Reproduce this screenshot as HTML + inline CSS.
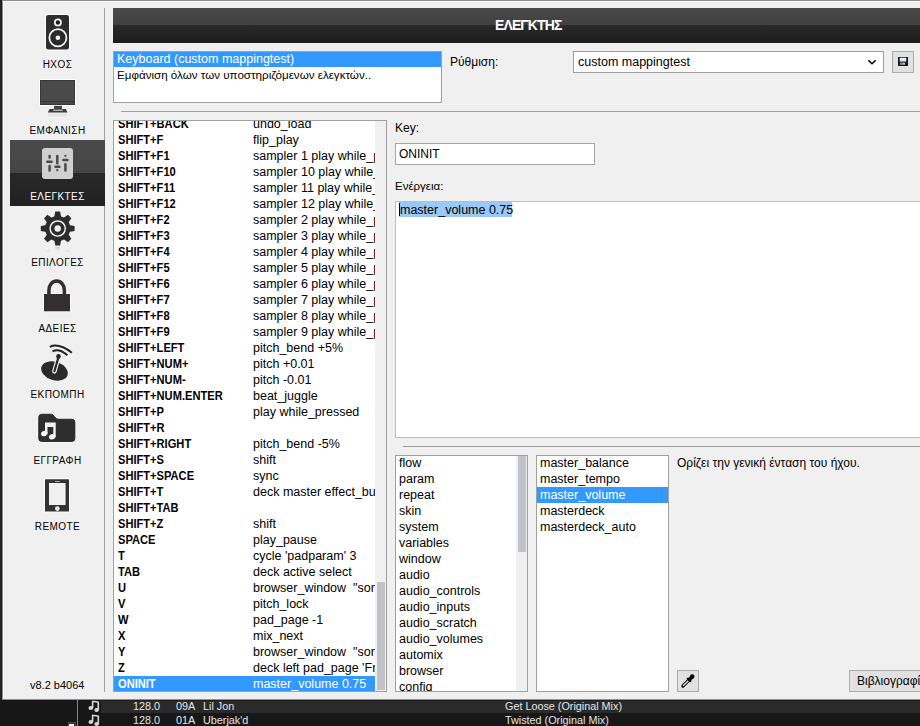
<!DOCTYPE html>
<html><head><meta charset="utf-8">
<style>
*{margin:0;padding:0;box-sizing:border-box}
html,body{width:920px;height:726px;overflow:hidden;background:#1a1a1a;font-family:"Liberation Sans",sans-serif;font-size:12px;color:#000}
.a{position:absolute}
.t{position:absolute;white-space:pre;line-height:16px}
.lb{position:absolute;background:#fff;border:1px solid #a0a0a0;overflow:hidden}
.row{position:absolute;left:0;height:16px;width:100%;white-space:pre;line-height:16px}
.sel{background:#3399ff;color:#fff}
.sb{position:absolute;background:#f0f0f0}
.th{position:absolute;background:#c2c3c8}
.side{position:absolute;left:0;width:115px;text-align:center;font-size:10px;letter-spacing:0.43px;line-height:12px;color:#000}
.btn{position:absolute;background:#e1e1e1;border:1px solid #adadad}
.lat{font-size:12.5px}
.kb{font-size:12.4px;font-weight:bold;transform:scaleX(0.897);transform-origin:0 0}
.trk{position:absolute;white-space:pre;font-size:10.8px;line-height:13px;color:#e6e6e6}
</style></head><body>
<div class="a" style="left:0;top:700px;width:920px;height:26px;background:#171717"></div>
<div class="a" style="left:101px;top:701px;width:819px;height:12px;background:#2a2a2a"></div>
<div class="a" style="left:101px;top:700px;width:819px;height:1px;background:#1e1e1e"></div>
<div class="a" style="left:77px;top:700px;width:1px;height:26px;background:#858585"></div>
<svg class="a" style="left:86px;top:699px" width="16" height="14" viewBox="86 699 16 14"><g fill="none" stroke="#d8d8d8" stroke-width="1.6"><path d="M92.6 708 V701.6 Q95.5 701.4 98.3 702.2 V710"/></g><ellipse cx="90.8" cy="708" rx="2.3" ry="2" fill="#d8d8d8"/><ellipse cx="96.6" cy="710.1" rx="2.3" ry="2" fill="#d8d8d8"/></svg>
<svg class="a" style="left:86px;top:712.5px" width="16" height="14" viewBox="86 699 16 14"><g fill="none" stroke="#d8d8d8" stroke-width="1.6"><path d="M92.6 708 V701.6 Q95.5 701.4 98.3 702.2 V710"/></g><ellipse cx="90.8" cy="708" rx="2.3" ry="2" fill="#d8d8d8"/><ellipse cx="96.6" cy="710.1" rx="2.3" ry="2" fill="#d8d8d8"/></svg>
<div class="a" style="left:68px;top:722px;width:8px;height:4px;background:#4a4a4a"></div><div class="a" style="left:69px;top:723px;width:6px;height:3px;background:#2a2a2a"></div><div class="a" style="left:69px;top:724px;width:5px;height:2px;background:#fafafa"></div>
<div class="trk" style="left:133px;top:700px">128.0</div>
<div class="trk" style="left:176px;top:700px">09A</div>
<div class="trk" style="left:203px;top:700px">Lil Jon</div>
<div class="trk" style="left:505px;top:700px">Get Loose (Original Mix)</div>
<div class="trk" style="left:133px;top:714px">128.0</div>
<div class="trk" style="left:176px;top:714px">01A</div>
<div class="trk" style="left:203px;top:714px">Uberjak'd</div>
<div class="trk" style="left:505px;top:714px">Twisted (Original Mix)</div>
<div class="a" style="left:0;top:0;width:2px;height:700px;background:#222"></div>
<div class="a" style="left:2px;top:0;width:930px;height:700px;background:#f0f0f0;border:1px solid #8f8f8f;border-right:none"></div>
<div class="a" style="left:3px;top:1px;width:917px;height:1px;background:#f8f8f8"></div>
<div class="a" style="left:3px;top:1px;width:1px;height:697px;background:#f8f8f8"></div>
<div class="a" style="left:104px;top:8px;width:1px;height:684px;background:#a0a0a0"></div>
<div class="a" style="left:10px;top:140px;width:95px;height:33px;background:linear-gradient(#4a4a4a,#454545)"></div>
<div class="a" style="left:10px;top:173px;width:95px;height:33px;background:linear-gradient(#282828,#212121)"></div>
<div class="side" style="top:59px;color:#000">ΗΧΟΣ</div>
<div class="side" style="top:125px;color:#000">ΕΜΦΑΝΙΣΗ</div>
<div class="side" style="top:191px;color:#fff">ΕΛΕΓΚΤΕΣ</div>
<div class="side" style="top:257px;color:#000">ΕΠΙΛΟΓΕΣ</div>
<div class="side" style="top:323px;color:#000">ΑΔΕΙΕΣ</div>
<div class="side" style="top:389px;color:#000">ΕΚΠΟΜΠΗ</div>
<div class="side" style="top:455px;color:#000">ΕΓΓΡΑΦΗ</div>
<div class="side" style="top:521px;color:#000">REMOTE</div>
<div class="t" style="left:30px;top:679px;font-size:11px;line-height:13px">v8.2 b4064</div>
<div class="a" style="left:113px;top:8px;width:807px;height:17px;background:linear-gradient(#4a4a4a,#404040)"></div>
<div class="a" style="left:113px;top:25px;width:807px;height:18px;background:linear-gradient(#2a2a2a,#1c1c1c)"></div>
<div class="t" style="left:495px;top:17px;font-size:14px;letter-spacing:-0.9px;font-weight:bold;color:#fff">ΕΛΕΓΚΤΗΣ</div>
<div class="lb" style="left:113px;top:51px;width:329px;height:52px"><div class="row sel lat" style="top:0;height:15px;line-height:15px;padding-left:3px">Keyboard (custom mappingtest)</div><div class="row" style="top:15px;padding-left:3px;font-size:11.6px">Εμφάνιση όλων των υποστηριζόμενων ελεγκτών..</div></div>
<div class="t" style="left:450px;top:54px">Ρύθμιση:</div>
<div class="lb" style="left:573px;top:51px;width:311px;height:22px"><div class="row lat" style="top:2px;padding-left:4px">custom mappingtest</div></div>
<svg class="a" style="left:866px;top:57px" width="12" height="10"><path d="M2.3 3.2 L6 6.8 L9.7 3.2" fill="none" stroke="#000" stroke-width="1.5"/></svg>
<div class="btn" style="left:892px;top:51px;width:22px;height:22px"></div>
<svg class="a" style="left:898px;top:57px" width="11" height="10"><defs><linearGradient id="fl" x1="0" y1="0" x2="0" y2="1"><stop offset="0" stop-color="#f8fafc"/><stop offset="1" stop-color="#cdd5df"/></linearGradient></defs><rect x="0" y="0" width="10" height="9" fill="#15181c"/><rect x="1.76" y="0.77" width="6.5" height="3.86" fill="url(#fl)"/><rect x="2" y="5.6" width="5.06" height="2.2" fill="#8e9296"/><rect x="5.2" y="5.9" width="1.5" height="1.6" fill="#d8dadc"/></svg>
<div class="a" style="left:121px;top:111px;width:799px;height:1px;background:#a0a0a0"></div>
<div class="lb" style="left:113px;top:120px;width:274px;height:572px"><div class="row" style="top:-5px"><span class="a kb" style="left:4px">SHIFT+BACK</span><span class="a lat" style="left:139px;width:122px;overflow:hidden">undo_load</span></div><div class="row" style="top:11px"><span class="a kb" style="left:4px">SHIFT+F</span><span class="a lat" style="left:139px;width:122px;overflow:hidden">flip_play</span></div><div class="row" style="top:27px"><span class="a kb" style="left:4px">SHIFT+F1</span><span class="a lat" style="left:139px;width:122px;overflow:hidden">sampler 1 play while_pressed</span></div><div class="row" style="top:43px"><span class="a kb" style="left:4px">SHIFT+F10</span><span class="a lat" style="left:139px;width:122px;overflow:hidden">sampler 10 play while_pressed</span></div><div class="row" style="top:59px"><span class="a kb" style="left:4px">SHIFT+F11</span><span class="a lat" style="left:139px;width:122px;overflow:hidden">sampler 11 play while_pressed</span></div><div class="row" style="top:75px"><span class="a kb" style="left:4px">SHIFT+F12</span><span class="a lat" style="left:139px;width:122px;overflow:hidden">sampler 12 play while_pressed</span></div><div class="row" style="top:91px"><span class="a kb" style="left:4px">SHIFT+F2</span><span class="a lat" style="left:139px;width:122px;overflow:hidden">sampler 2 play while_pressed</span></div><div class="row" style="top:107px"><span class="a kb" style="left:4px">SHIFT+F3</span><span class="a lat" style="left:139px;width:122px;overflow:hidden">sampler 3 play while_pressed</span></div><div class="row" style="top:123px"><span class="a kb" style="left:4px">SHIFT+F4</span><span class="a lat" style="left:139px;width:122px;overflow:hidden">sampler 4 play while_pressed</span></div><div class="row" style="top:139px"><span class="a kb" style="left:4px">SHIFT+F5</span><span class="a lat" style="left:139px;width:122px;overflow:hidden">sampler 5 play while_pressed</span></div><div class="row" style="top:155px"><span class="a kb" style="left:4px">SHIFT+F6</span><span class="a lat" style="left:139px;width:122px;overflow:hidden">sampler 6 play while_pressed</span></div><div class="row" style="top:171px"><span class="a kb" style="left:4px">SHIFT+F7</span><span class="a lat" style="left:139px;width:122px;overflow:hidden">sampler 7 play while_pressed</span></div><div class="row" style="top:187px"><span class="a kb" style="left:4px">SHIFT+F8</span><span class="a lat" style="left:139px;width:122px;overflow:hidden">sampler 8 play while_pressed</span></div><div class="row" style="top:203px"><span class="a kb" style="left:4px">SHIFT+F9</span><span class="a lat" style="left:139px;width:122px;overflow:hidden">sampler 9 play while_pressed</span></div><div class="row" style="top:219px"><span class="a kb" style="left:4px">SHIFT+LEFT</span><span class="a lat" style="left:139px;width:122px;overflow:hidden">pitch_bend +5%</span></div><div class="row" style="top:235px"><span class="a kb" style="left:4px">SHIFT+NUM+</span><span class="a lat" style="left:139px;width:122px;overflow:hidden">pitch +0.01</span></div><div class="row" style="top:251px"><span class="a kb" style="left:4px">SHIFT+NUM-</span><span class="a lat" style="left:139px;width:122px;overflow:hidden">pitch -0.01</span></div><div class="row" style="top:267px"><span class="a kb" style="left:4px">SHIFT+NUM.ENTER</span><span class="a lat" style="left:139px;width:122px;overflow:hidden">beat_juggle</span></div><div class="row" style="top:283px"><span class="a kb" style="left:4px">SHIFT+P</span><span class="a lat" style="left:139px;width:122px;overflow:hidden">play while_pressed</span></div><div class="row" style="top:299px"><span class="a kb" style="left:4px">SHIFT+R</span><span class="a lat" style="left:139px;width:122px;overflow:hidden"></span></div><div class="row" style="top:315px"><span class="a kb" style="left:4px">SHIFT+RIGHT</span><span class="a lat" style="left:139px;width:122px;overflow:hidden">pitch_bend -5%</span></div><div class="row" style="top:331px"><span class="a kb" style="left:4px">SHIFT+S</span><span class="a lat" style="left:139px;width:122px;overflow:hidden">shift</span></div><div class="row" style="top:347px"><span class="a kb" style="left:4px">SHIFT+SPACE</span><span class="a lat" style="left:139px;width:122px;overflow:hidden">sync</span></div><div class="row" style="top:363px"><span class="a kb" style="left:4px">SHIFT+T</span><span class="a lat" style="left:139px;width:122px;overflow:hidden">deck master effect_button</span></div><div class="row" style="top:379px"><span class="a kb" style="left:4px">SHIFT+TAB</span><span class="a lat" style="left:139px;width:122px;overflow:hidden"></span></div><div class="row" style="top:395px"><span class="a kb" style="left:4px">SHIFT+Z</span><span class="a lat" style="left:139px;width:122px;overflow:hidden">shift</span></div><div class="row" style="top:411px"><span class="a kb" style="left:4px">SPACE</span><span class="a lat" style="left:139px;width:122px;overflow:hidden">play_pause</span></div><div class="row" style="top:427px"><span class="a kb" style="left:4px">T</span><span class="a lat" style="left:139px;width:122px;overflow:hidden">cycle 'padparam' 3</span></div><div class="row" style="top:443px"><span class="a kb" style="left:4px">TAB</span><span class="a lat" style="left:139px;width:122px;overflow:hidden">deck active select</span></div><div class="row" style="top:459px"><span class="a kb" style="left:4px">U</span><span class="a lat" style="left:139px;width:122px;overflow:hidden">browser_window  "sort"</span></div><div class="row" style="top:475px"><span class="a kb" style="left:4px">V</span><span class="a lat" style="left:139px;width:122px;overflow:hidden">pitch_lock</span></div><div class="row" style="top:491px"><span class="a kb" style="left:4px">W</span><span class="a lat" style="left:139px;width:122px;overflow:hidden">pad_page -1</span></div><div class="row" style="top:507px"><span class="a kb" style="left:4px">X</span><span class="a lat" style="left:139px;width:122px;overflow:hidden">mix_next</span></div><div class="row" style="top:523px"><span class="a kb" style="left:4px">Y</span><span class="a lat" style="left:139px;width:122px;overflow:hidden">browser_window  "sort"</span></div><div class="row" style="top:539px"><span class="a kb" style="left:4px">Z</span><span class="a lat" style="left:139px;width:122px;overflow:hidden">deck left pad_page 'Free'</span></div><div class="row sel" style="top:555px"><span class="a kb" style="left:4px">ONINIT</span><span class="a lat" style="left:139px;width:122px;overflow:hidden">master_volume 0.75</span></div><div class="sb" style="left:261px;top:0;width:11px;height:570px"><div class="th" style="left:2px;top:461px;width:8px;height:108px"></div></div></div>
<div class="t" style="left:395px;top:120px">Key:</div>
<div class="lb" style="left:395px;top:143px;width:200px;height:22px;border-color:#a5a5a5"><div class="row" style="top:2px;padding-left:3px">ONINIT</div></div>
<div class="t" style="left:395px;top:178px;font-size:11.5px">Ενέργεια:</div>
<div class="lb" style="left:395px;top:201px;width:540px;height:237px;border-color:#90c8f8"><div class="a" style="left:3px;top:0;width:113px;height:15px;background:#99c9f4"></div><div class="row lat" style="top:0;padding-left:4px">master_volume 0.75</div><div class="a" style="left:3px;top:1px;width:1px;height:13px;background:#000"></div></div>
<div class="a" style="left:403px;top:446px;width:517px;height:1px;background:#a0a0a0"></div>
<div class="lb" style="left:395px;top:455px;width:133px;height:237px"><div class="row lat" style="top:-1px;padding-left:3px">flow</div><div class="row lat" style="top:15px;padding-left:3px">param</div><div class="row lat" style="top:31px;padding-left:3px">repeat</div><div class="row lat" style="top:47px;padding-left:3px">skin</div><div class="row lat" style="top:63px;padding-left:3px">system</div><div class="row lat" style="top:79px;padding-left:3px">variables</div><div class="row lat" style="top:95px;padding-left:3px">window</div><div class="row lat" style="top:111px;padding-left:3px">audio</div><div class="row lat" style="top:127px;padding-left:3px">audio_controls</div><div class="row lat" style="top:143px;padding-left:3px">audio_inputs</div><div class="row lat" style="top:159px;padding-left:3px">audio_scratch</div><div class="row lat" style="top:175px;padding-left:3px">audio_volumes</div><div class="row lat" style="top:191px;padding-left:3px">automix</div><div class="row lat" style="top:207px;padding-left:3px">browser</div><div class="row lat" style="top:223px;padding-left:3px">config</div><div class="sb" style="left:120px;top:0;width:11px;height:235px"><div class="th" style="left:2px;top:0;width:8px;height:96px"></div></div></div>
<div class="lb" style="left:536px;top:455px;width:133px;height:237px"><div class="row lat" style="top:-1px;padding-left:3px">master_balance</div><div class="row lat" style="top:15px;padding-left:3px">master_tempo</div><div class="row lat sel" style="top:31px;padding-left:3px">master_volume</div><div class="row lat" style="top:47px;padding-left:3px">masterdeck</div><div class="row lat" style="top:63px;padding-left:3px">masterdeck_auto</div></div>
<div class="t" style="left:677px;top:455px">Ορίζει την γενική ένταση του ήχου.</div>
<div class="btn" style="left:677px;top:670px;width:22px;height:22px"></div>
<svg class="a" style="left:677px;top:670px" width="22" height="22" viewBox="677 670 22 22"><path d="M683 686 L689.3 679.7" stroke="#000" stroke-width="3.3" stroke-linecap="round"/><path d="M683.4 685.6 L688.8 680.2" stroke="#e1e1e1" stroke-width="1.4" stroke-linecap="round"/><path d="M687.3 678 L691 681.7" stroke="#000" stroke-width="2.2"/><path d="M689.5 679.5 L692 677" stroke="#000" stroke-width="3.4" stroke-linecap="round"/><circle cx="692.2" cy="676.6" r="2.3" fill="#000"/></svg>
<div class="btn" style="left:849px;top:670px;width:90px;height:22px"></div>
<div class="t" style="left:857px;top:673px">Βιβλιογραφία</div>
<svg class="a" style="left:0;top:0" width="110" height="560" viewBox="0 0 110 560">
<g fill="none" stroke="#fcfcfc" stroke-width="2">
<rect x="46" y="15" width="23" height="34.6" rx="2.3"/>
<rect x="40" y="80" width="35" height="25"/>
<rect x="44" y="294" width="26" height="17.3"/>
<rect x="45" y="479.2" width="24" height="32.4" rx="0.6"/>
<path d="M41.7 414.2 H51.5 C53.5 414.2 55.5 419.2 58.5 419.2 H71.9 A3 3 0 0 1 74.9 422.2 V438.5 A3 3 0 0 1 71.9 441.5 H41.7 A3 3 0 0 1 38.7 438.5 V417.2 A3 3 0 0 1 41.7 414.2 Z"/>
</g>

<rect x="46" y="15" width="23" height="34.6" rx="2.3" fill="#2d2d2d"/>
<circle cx="57.9" cy="22.4" r="3.1" fill="none" stroke="#f4f4f4" stroke-width="1.7"/>
<circle cx="57.9" cy="22.4" r="1.3" fill="#151515"/>
<circle cx="57.9" cy="37.75" r="8.55" fill="none" stroke="#f4f4f4" stroke-width="1.75"/>
<circle cx="57.9" cy="37.75" r="5.6" fill="none" stroke="#262626" stroke-width="1.2"/>
<circle cx="57.9" cy="37.75" r="2.3" fill="#f0f0f0"/>
<rect x="40" y="80" width="35" height="25" fill="#383838"/>
<rect x="41" y="81" width="33" height="20" fill="#4a4a4a"/>
<rect x="41" y="102" width="33" height="2" fill="#474747"/>
<path d="M49.6 109 L65.8 109 L67.5 112.4 L47.8 112.4 Z" fill="#3c3c3c"/>
<rect x="54" y="105.8" width="8" height="4" fill="#454545"/>
<rect x="53.2" y="109.8" width="9.6" height="0.9" fill="#e8e8e8"/>
<rect x="48" y="113.4" width="19" height="3" fill="#e4e4e4" opacity="0.8"/>
<rect x="42" y="148" width="31" height="31" rx="3" fill="#d0d0d0"/>
<g stroke="#4a4a4a" stroke-width="2.5" stroke-linecap="round" fill="none">
<path d="M49.6 156.1 V157.4 M49.6 166 V170.4"/>
<path d="M47.4 161.75 H51.5"/>
<path d="M57.3 156.1 V163.3"/>
<path d="M55.5 166.8 H59.4"/>
<path d="M65.4 164.2 V170.4"/>
<path d="M63.4 160 H67.5"/>
</g>
<circle cx="57.3" cy="170.15" r="1.15" fill="#4a4a4a"/>
<circle cx="65.4" cy="155.85" r="1.1" fill="#4a4a4a"/>
<g transform="translate(57.7 228.5)" fill="#2c2c2c">
<circle r="12.6"/>
<g id="tooth"><path d="M-2.4 -16.9 L2.4 -16.9 L3.5 -11 L-3.5 -11 Z"/></g>
<use href="#tooth" transform="rotate(45)"/><use href="#tooth" transform="rotate(90)"/><use href="#tooth" transform="rotate(135)"/>
<use href="#tooth" transform="rotate(180)"/><use href="#tooth" transform="rotate(225)"/><use href="#tooth" transform="rotate(270)"/><use href="#tooth" transform="rotate(315)"/>
<circle r="7.6" fill="none" stroke="#f0f0f0" stroke-width="1.45"/>
<circle r="3.2" fill="#f0f0f0"/>
</g>
<defs><linearGradient id="rg" x1="0" y1="0" x2="0" y2="1"><stop offset="0" stop-color="#d2d2d2"/><stop offset="1" stop-color="#f0f0f0"/></linearGradient></defs>
<path d="M55.3 246.8 L60.1 246.8 L59.6 251.5 L55.8 251.5 Z" fill="url(#rg)"/>
<path d="M45.5 252 L48.5 249.2 L50.5 251.5 Z" fill="#e2e2e2"/>
<path d="M69.9 252 L66.9 249.2 L64.9 251.5 Z" fill="#e2e2e2"/>
<rect x="44" y="294" width="26" height="17.3" fill="#332f30"/>
<path d="M48.95 295 L48.95 290 A7.7 9 0 0 1 64.35 290 L64.35 295" fill="none" stroke="#332f30" stroke-width="3.5"/>
<ellipse cx="54.5" cy="371" rx="13.7" ry="9.1" transform="rotate(18 54.5 371)" fill="#2a2a2a"/>
<path d="M54.4 371.3 L58.6 356.6" stroke="#f0f0f0" stroke-width="4.6" stroke-linecap="round"/>
<path d="M54.4 371.3 L58.6 356.6" stroke="#2a2a2a" stroke-width="2.2" stroke-linecap="round"/>
<circle cx="58.5" cy="356.4" r="2.3" fill="#2a2a2a"/>
<path d="M49.8 346.8 Q58.5 342.6 71.9 352.7" fill="none" stroke="#222" stroke-width="1.9"/>
<path d="M52.5 351.3 Q59 347.8 67.4 355.2" fill="none" stroke="#222" stroke-width="1.9"/>
<path d="M41.7 414.2 H51.5 C53.5 414.2 55.5 419.2 58.5 419.2 H71.9 A3 3 0 0 1 74.9 422.2 V438.5 A3 3 0 0 1 71.9 441.5 H41.7 A3 3 0 0 1 38.7 438.5 V417.2 A3 3 0 0 1 41.7 414.2 Z" fill="#2e2e2e" stroke="#1a1a1a" stroke-width="0.8"/>
<path d="M45 422.4 H55.7 V437 H53.3 V427.1 H47.5 V433.5 H45 Z" fill="#f4f4f4"/>
<ellipse cx="44.3" cy="433.5" rx="3.3" ry="2.6" transform="rotate(-20 44.3 433.5)" fill="#f4f4f4"/>
<ellipse cx="52.2" cy="436.8" rx="3.3" ry="2.6" transform="rotate(-20 52.2 436.8)" fill="#f4f4f4"/>
<rect x="45" y="479.2" width="24" height="32.4" rx="0.6" fill="#333"/>
<rect x="49" y="483" width="16.6" height="22" fill="#f0f0f0"/>
<rect x="54.9" y="481" width="4.8" height="1" fill="#b0b0b0"/>
<circle cx="57.35" cy="508.6" r="2.3" fill="#f0f0f0"/>
<circle cx="57.35" cy="508.6" r="0.9" fill="#d8d8d8"/>
</svg>

</body></html>
